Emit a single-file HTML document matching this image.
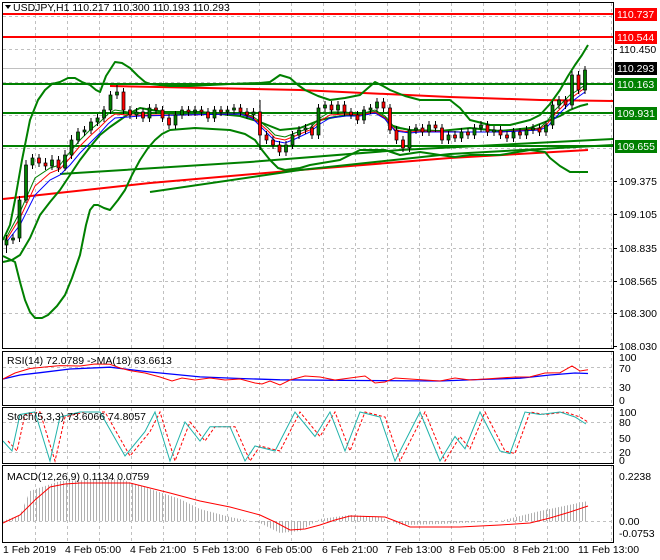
<!DOCTYPE html>
<html><head><meta charset="utf-8"><style>
html,body{margin:0;padding:0;background:#fff;}
svg{display:block;font-family:"Liberation Sans",sans-serif;}
</style></head><body>
<svg width="660" height="560" xmlns="http://www.w3.org/2000/svg">
<defs>
<pattern id="hp" width="3" height="10" patternUnits="userSpaceOnUse"><rect x="0" y="0" width="1" height="10" fill="#b0b0b0"/></pattern>
</defs>
<rect width="660" height="560" fill="#fff"/>
<g stroke="#c0c0c0" stroke-dasharray="3,3" stroke-width="1">
<path d="M35.5,3V348M67.5,3V348M99.5,3V348M131.5,3V348M163.5,3V348M195.5,3V348M227.5,3V348M259.5,3V348M291.5,3V348M323.5,3V348M355.5,3V348M387.5,3V348M419.5,3V348M451.5,3V348M483.5,3V348M515.5,3V348M547.5,3V348M579.5,3V348M611.5,3V348"/>
<path d="M35.5,352V405M67.5,352V405M99.5,352V405M131.5,352V405M163.5,352V405M195.5,352V405M227.5,352V405M259.5,352V405M291.5,352V405M323.5,352V405M355.5,352V405M387.5,352V405M419.5,352V405M451.5,352V405M483.5,352V405M515.5,352V405M547.5,352V405M579.5,352V405M611.5,352V405"/>
<path d="M35.5,408V463M67.5,408V463M99.5,408V463M131.5,408V463M163.5,408V463M195.5,408V463M227.5,408V463M259.5,408V463M291.5,408V463M323.5,408V463M355.5,408V463M387.5,408V463M419.5,408V463M451.5,408V463M483.5,408V463M515.5,408V463M547.5,408V463M579.5,408V463M611.5,408V463"/>
<path d="M35.5,466V542M67.5,466V542M99.5,466V542M131.5,466V542M163.5,466V542M195.5,466V542M227.5,466V542M259.5,466V542M291.5,466V542M323.5,466V542M355.5,466V542M387.5,466V542M419.5,466V542M451.5,466V542M483.5,466V542M515.5,466V542M547.5,466V542M579.5,466V542M611.5,466V542"/>
<path d="M3,16.5H613M3,49.5H613M3,82.5H613M3,115.5H613M3,148.5H613M3,181.5H613M3,214.5H613M3,248.5H613M3,281.5H613M3,313.5H613M3,367.5H613M3,387.5H613M3,422.5H613M3,452.5H613M3,521.5H613"/>
</g>
<line x1="3" y1="68.5" x2="613" y2="68.5" stroke="#c0c0c0"/>
<!-- levels -->
<g fill="none" stroke-width="2" stroke-linejoin="round">
<path d="M3,14H613M3,37H613" stroke="#ff0000"/>
<path d="M3,84H613M3,113H613M3,146H613" stroke="#008000"/>
<polyline points="3,199 150,183 300,170 450,158 588,150" stroke="#ff0000"/>
<polyline points="110,86 300,90 450,97 540,100 613,101" stroke="#ff0000"/>
<polyline points="60,174 250,162 400,150 613,139" stroke="#008000"/>
<polyline points="150,192 300,170 450,154 613,145" stroke="#008000"/>
<polyline points="3,240 10,225 15,200 22,160 30,120 38,100 45,90 52,84 60,82 68,78 75,78 82,82 90,85 96,90 100,92 106,76 115,62 122,63 130,68 138,76 145,82 150,84 170,86 190,86 230,84 260,83 270,82 280,75 290,78 298,85 305,90 318,96 330,100 345,98 360,95 368,88 375,82 383,86 390,90 405,96 420,100 450,100 460,108 470,120 490,125 510,125 530,120 540,115 550,104 560,90 568,76 575,65 582,55 588,45" stroke="#008000"/>
<polyline points="3,256 15,262 20,282 25,300 30,312 35,318 42,318 48,315 57,306 65,295 72,278 80,255 86,225 90,210 94,205 98,205 104,208 110,210 118,200 125,190 132,175 140,160 148,148 155,140 162,134 170,130 195,128 230,130 245,134 255,140 262,150 270,160 278,168 285,170 300,168 310,165 340,160 360,150 385,150 400,155 420,152 440,155 455,157 470,155 500,155 530,150 545,152 550,158 560,166 570,172 588,172" stroke="#008000"/>
<polyline points="3,262 12,260 20,255 30,238 40,215 50,202 60,190 70,175 80,160 90,147 100,135 110,127 120,120 130,113 140,108 152,110 165,112 200,112 240,116 260,122 270,126 280,130 300,128 320,120 335,117 350,115 375,112 385,118 390,125 400,128 410,130 440,131 470,128 500,131 530,128 540,124 550,120 560,116 570,110 580,106 588,104" stroke="#008000"/>
</g>
<!-- moving averages -->
<g fill="none" stroke-width="1">
<polyline stroke="#008000" points="5,240 20,212 35,178 50,168 60,165 70,152 80,140 90,130 100,122 108,114 115,110 128,112 140,113 180,114 240,113 252,116 258,120 268,128 275,135 285,137 295,133 310,128 320,118 330,112 345,112 360,114 375,110 385,116 395,128 410,130 420,130 460,132 500,132 540,128 548,120 555,110 563,102 570,95 578,90 585,85"/>
<polyline stroke="#ff0000" points="5,242 20,218 35,186 50,173 60,169 70,158 80,146 90,136 100,127 108,119 115,114 128,115 140,115 180,115 240,114 252,117 258,122 268,131 275,138 285,140 295,136 310,130 320,121 330,115 345,114 360,115 375,112 385,118 395,130 410,132 420,131 460,132 500,132 540,129 548,123 555,114 563,106 570,99 578,93 585,88"/>
<polyline stroke="#0000ff" points="5,244 20,225 35,195 50,180 60,175 70,165 80,153 90,143 100,133 108,124 115,118 128,117 140,116 180,115 240,114 252,118 258,124 268,134 275,141 285,143 295,139 310,132 320,124 330,118 345,116 360,116 375,113 385,119 395,131 410,133 420,132 460,132 500,132 540,130 548,126 555,118 563,110 570,103 578,97 585,92"/>
</g>
<!-- wicks -->
<path stroke="#000" stroke-width="1" fill="none" d="M6.5,235v18M13,234v10M19.5,196v46M26,160v43M32.5,154v15M39,154v13M45.5,158v12M52,155v15M58.5,156v16M65,150v21M71.5,135v24M78,128v16M84.5,126v10M91,118v16M97.5,114v12M104,106v16M110.5,91v23M117,85v14M123.5,88v26M130,106v13M136.5,108v11M143,108v14M149.5,104v18M156,104v10M162.5,106v16M169,114v15M175.5,111v18M182,106v13M188.5,106v10M195,106v10M201.5,106v10M208,108v14M214.5,106v16M221,106v10M227.5,106v10M234,104v10M240.5,104v12M247,108v11M253.5,108v11M260,100v50M266.5,131v13M273,136v13M279.5,141v15M286,141v15M292.5,131v18M299,126v13M305.5,124v10M312,124v15M318.5,104v35M325,101v11M331.5,101v13M338,101v13M344.5,101v15M351,108v11M357.5,111v13M364,106v18M370.5,104v10M377,98v14M383.5,98v14M390,104v30M396.5,126v18M403,136v16M409.5,126v26M416,124v10M422.5,124v12M429,121v15M435.5,121v11M442,124v20M448.5,131v13M455,131v11M461.5,128v14M468,128v11M474.5,124v15M481,121v11M487.5,121v15M494,126v10M500.5,126v13M507,131v11M513.5,128v14M520,128v11M526.5,126v13M533,124v10M539.5,124v12M546,121v15M552.5,101v28M559,96v13M565.5,96v13M572,71v38M578.5,71v23M585,66v28"/>
<!-- green bodies -->
<g fill="#008000" stroke="#000" stroke-width=".7">
<rect x="5" y="240" width="3" height="5"/><rect x="11.5" y="238" width="3" height="2"/><rect x="18" y="200" width="3" height="38"/><rect x="24.5" y="165" width="3" height="35"/><rect x="31" y="158" width="3" height="7"/><rect x="50.5" y="160" width="3" height="6"/><rect x="63.5" y="155" width="3" height="13"/><rect x="70" y="140" width="3" height="15"/><rect x="76.5" y="132" width="3" height="8"/><rect x="83" y="130" width="3" height="2"/><rect x="89.5" y="122" width="3" height="8"/><rect x="96" y="118" width="3" height="4"/><rect x="102.5" y="110" width="3" height="8"/><rect x="109" y="95" width="3" height="15"/><rect x="115.5" y="92" width="3" height="3"/><rect x="135" y="112" width="3" height="3"/><rect x="148" y="108" width="3" height="10"/><rect x="174" y="115" width="3" height="10"/><rect x="180.5" y="110" width="3" height="5"/><rect x="193.5" y="110" width="3" height="2"/><rect x="213" y="110" width="3" height="8"/><rect x="226" y="110" width="3" height="2"/><rect x="232.5" y="108" width="3" height="2"/><rect x="252" y="112" width="3" height="3"/><rect x="284.5" y="145" width="3" height="7"/><rect x="291" y="135" width="3" height="10"/><rect x="297.5" y="130" width="3" height="5"/><rect x="304" y="128" width="3" height="2"/><rect x="317" y="108" width="3" height="27"/><rect x="323.5" y="105" width="3" height="3"/><rect x="336.5" y="105" width="3" height="5"/><rect x="362.5" y="110" width="3" height="10"/><rect x="369" y="108" width="3" height="2"/><rect x="375.5" y="102" width="3" height="6"/><rect x="408" y="130" width="3" height="18"/><rect x="414.5" y="128" width="3" height="2"/><rect x="427.5" y="125" width="3" height="7"/><rect x="447" y="135" width="3" height="5"/><rect x="460" y="132" width="3" height="6"/><rect x="473" y="128" width="3" height="7"/><rect x="479.5" y="125" width="3" height="3"/><rect x="492.5" y="130" width="3" height="2"/><rect x="512" y="132" width="3" height="6"/><rect x="525" y="130" width="3" height="5"/><rect x="531.5" y="128" width="3" height="2"/><rect x="544.5" y="125" width="3" height="7"/><rect x="551" y="105" width="3" height="20"/><rect x="557.5" y="100" width="3" height="5"/><rect x="570.5" y="75" width="3" height="30"/><rect x="583.5" y="70" width="3" height="20"/>
</g>
<g fill="#ff0000" stroke="#000" stroke-width=".7">
<rect x="37.5" y="158" width="3" height="5"/><rect x="44" y="163" width="3" height="3"/><rect x="57" y="160" width="3" height="8"/><rect x="122" y="92" width="3" height="18"/><rect x="128.5" y="110" width="3" height="5"/><rect x="141.5" y="112" width="3" height="6"/><rect x="154.5" y="108" width="3" height="2"/><rect x="161" y="110" width="3" height="8"/><rect x="167.5" y="118" width="3" height="7"/><rect x="187" y="110" width="3" height="2"/><rect x="200" y="110" width="3" height="2"/><rect x="206.5" y="112" width="3" height="6"/><rect x="219.5" y="110" width="3" height="2"/><rect x="239" y="108" width="3" height="4"/><rect x="245.5" y="112" width="3" height="3"/><rect x="258.5" y="112" width="3" height="23"/><rect x="265" y="135" width="3" height="5"/><rect x="271.5" y="140" width="3" height="5"/><rect x="278" y="145" width="3" height="7"/><rect x="310.5" y="128" width="3" height="7"/><rect x="330" y="105" width="3" height="5"/><rect x="343" y="105" width="3" height="7"/><rect x="349.5" y="112" width="3" height="3"/><rect x="356" y="115" width="3" height="5"/><rect x="382" y="102" width="3" height="6"/><rect x="388.5" y="108" width="3" height="22"/><rect x="395" y="130" width="3" height="10"/><rect x="401.5" y="140" width="3" height="8"/><rect x="421" y="128" width="3" height="4"/><rect x="434" y="125" width="3" height="3"/><rect x="440.5" y="128" width="3" height="12"/><rect x="453.5" y="135" width="3" height="3"/><rect x="466.5" y="132" width="3" height="3"/><rect x="486" y="125" width="3" height="7"/><rect x="499" y="130" width="3" height="5"/><rect x="505.5" y="135" width="3" height="3"/><rect x="518.5" y="132" width="3" height="3"/><rect x="538" y="128" width="3" height="4"/><rect x="564" y="100" width="3" height="5"/><rect x="577" y="75" width="3" height="15"/>
</g>
<!-- RSI -->
<polyline fill="none" stroke="#0000ff" stroke-width="1.3" points="3,379 20,375 40,372.7 70,369 110,367.2 150,372 200,376.9 240,378.5 280,379.8 360,380.5 440,381 480,379.5 520,378.2 550,375 575,373 588,373.5"/>
<polyline fill="none" stroke="#ff0000" points="3,379 15,373 30,368.5 45,367 60,365.6 80,366 95,364 110,364.3 120,368 130,370.6 145,373 160,377 172,381 182,378 195,380 210,378 225,380 240,379 255,383 262,384 270,381 280,385 290,380 305,376 320,377 335,380 350,378 365,376 375,383 385,382 395,378 410,379 425,380 440,381 455,378 470,380 485,379 500,378 515,377 530,376.9 545,373 560,372.7 572,366 580,371 588,369.8"/>
<!-- Stoch -->
<polyline fill="none" stroke="#ff0000" stroke-dasharray="3,2" points="8,441 17,451 25,414.5 40,412 55,461 65,417 85,412 105,412 130,456 150,431.6 160,412 175,461 190,422 205,441 215,426.7 235,426.7 250,461 260,446 280,451 300,412 320,436.5 335,412 350,451 365,412 385,417 400,461 425,412 445,461 460,436.5 470,448.8 485,412 505,451 515,453.6 530,412 545,414.5 565,412 580,417 588,422"/>
<polyline fill="none" stroke="#20b2aa" points="3,441 12,451 20,414.5 35,412 50,461 60,417 80,412 100,412 125,456 145,431.6 155,412 170,461 185,422 200,441 210,426.7 230,426.7 245,461 255,446 275,451 295,412 315,436.5 330,412 345,451 360,412 380,417 395,461 420,412 440,461 455,436.5 465,448.8 480,412 500,451 510,453.6 525,412 540,414.5 560,412 575,417 586,424"/>
<!-- MACD -->
<polygon fill="url(#hp)" points="3,521 20,515 30,491 60,481 120,479 150,489 180,499 200,509 230,517 260,523 280,533 300,531 320,519 350,515 380,517 400,525 440,524 500,521 540,511 588,501 588,521"/>
<polyline fill="none" stroke="#ff0000" points="3,523 20,515 35,500 50,487 65,484 80,483 130,483 150,488 170,493 200,501 230,507 260,515 275,522 290,530 305,529 320,525 335,520 350,516 385,517 398,522 410,527 460,527 500,525 530,523 550,518 570,512 588,506"/>
<!-- frames -->
<g fill="none" stroke="#000" stroke-width="1">
<rect x="2.5" y="2.5" width="611" height="346"/>
<rect x="2.5" y="351.5" width="611" height="54"/>
<rect x="2.5" y="407.5" width="611" height="56"/>
<rect x="2.5" y="465.5" width="611" height="77"/>
</g>
<g font-size="10.5" fill="#000">
<text x="13" y="11">USDJPY,H1  110.217 110.300 110.193 110.293</text>
<text x="7" y="364">RSI(14) 72.0789  -&gt;MA(18) 63.6613</text>
<text x="7" y="420">Stoch(5,3,3) 73.6066 74.8057</text>
<text x="7" y="480">MACD(12,26,9) 0.1134 0.0759</text>
</g>
<path d="M5,5 L11,5 L8,9 Z" fill="#000"/>
<!-- axis -->
<path stroke="#000" d="M613,49.5h4M613,181.5h4M613,214.5h4M613,248.5h4M613,281.5h4M613,313.5h4M613,346.5h4"/>
<g font-size="10.5" fill="#000">
<text x="619" y="53">110.450</text><text x="619" y="185">109.375</text><text x="619" y="218">109.105</text><text x="619" y="252">108.835</text><text x="619" y="285">108.565</text><text x="619" y="317">108.300</text><text x="619" y="350">108.030</text>
</g>
<rect x="615" y="8" width="42" height="13" fill="#ff0000"/><rect x="615" y="31" width="42" height="13" fill="#ff0000"/>
<rect x="615" y="62" width="42" height="13" fill="#000"/>
<rect x="615" y="78" width="42" height="13" fill="#008000"/><rect x="615" y="107" width="42" height="13" fill="#008000"/><rect x="615" y="140" width="42" height="13" fill="#008000"/>
<g font-size="10.5" fill="#fff">
<text x="617" y="18">110.737</text><text x="617" y="41">110.544</text><text x="617" y="72">110.293</text><text x="617" y="88">110.163</text><text x="617" y="117">109.931</text><text x="617" y="150">109.655</text>
</g>
<g font-size="10.5" fill="#000">
<text x="3" y="553">1 Feb 2019</text>
<text x="65" y="553">4 Feb 05:00</text>
<text x="130" y="553">4 Feb 21:00</text>
<text x="193" y="553">5 Feb 13:00</text>
<text x="256" y="553">6 Feb 05:00</text>
<text x="322" y="553">6 Feb 21:00</text>
<text x="386" y="553">7 Feb 13:00</text>
<text x="449" y="553">8 Feb 05:00</text>
<text x="513" y="553">8 Feb 21:00</text>
<text x="578" y="553">11 Feb 13:00</text>
<text x="619" y="361">100</text><text x="619" y="372">70</text><text x="619" y="391">30</text><text x="619" y="404">0</text>
<text x="619" y="416">100</text><text x="619" y="426">80</text><text x="619" y="442">50</text><text x="619" y="456">20</text><text x="619" y="464">0</text>
<text x="619" y="480">0.2238</text><text x="619" y="525">0.00</text><text x="619" y="537">-0.0753</text>
</g>
</svg>
</body></html>
